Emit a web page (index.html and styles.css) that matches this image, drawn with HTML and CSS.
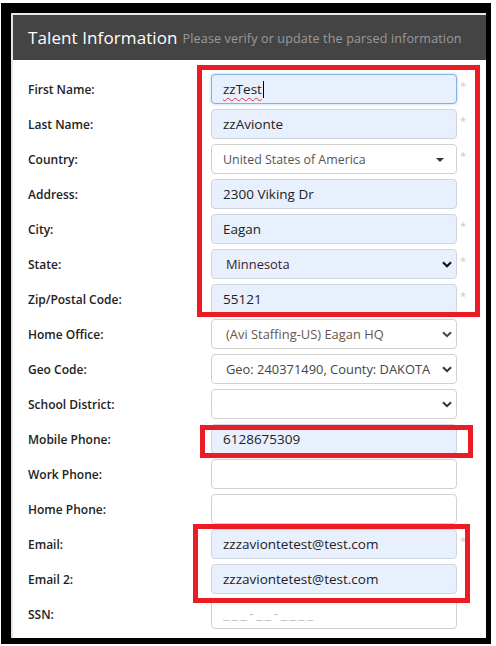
FILE: index.html
```html
<!DOCTYPE html>
<html lang="en">
<head>
    <meta charset="UTF-8">
    <meta name="viewport" content="width=device-width, initial-scale=1.0">
    <title>Talent Information</title>
    <link rel="stylesheet" href="styles.css">
</head>
<body>
    <div class="frame">
        <div class="panel">
            <div class="panel-head">
                <span class="title">Talent Information</span>
                <span class="subtitle">Please verify or update the parsed information</span>
            </div>

            <form class="panel-body">
                <label>First Name:</label>
                <div class="field filled focus"><span class="typo">zzTest</span><span class="caret"></span></div>
                <span class="req">*</span>

                <label>Last Name:</label>
                <input class="field filled" value="zzAvionte">
                <span class="req">*</span>

                <label>Country:</label>
                <div class="field picker">
                    <span>United States of America</span>
                    <span class="tri"></span>
                </div>
                <span class="req">*</span>

                <label>Address:</label>
                <input class="field filled" value="2300 Viking Dr">
                <span></span>

                <label>City:</label>
                <input class="field filled" value="Eagan">
                <span class="req">*</span>

                <label>State:</label>
                <div class="field filled dropdown state">
                    <span>Minnesota</span>
                    <svg width="10" height="7" viewBox="0 0 10 7"><path d="M1 1.2 L5 5.2 L9 1.2" fill="none" stroke="#111" stroke-width="2.2"/></svg>
                </div>
                <span class="req">*</span>

                <label>Zip/Postal Code:</label>
                <input class="field filled" value="55121">
                <span class="req">*</span>

                <label>Home Office:</label>
                <div class="field dropdown office">
                    <span>(Avi Staffing-US) Eagan HQ</span>
                    <svg width="10" height="7" viewBox="0 0 10 7"><path d="M1 1.2 L5 5.2 L9 1.2" fill="none" stroke="#444" stroke-width="2"/></svg>
                </div>
                <span></span>

                <label>Geo Code:</label>
                <div class="field dropdown">
                    <span>Geo: 240371490, County: DAKOTA</span>
                    <svg width="10" height="7" viewBox="0 0 10 7"><path d="M1 1.2 L5 5.2 L9 1.2" fill="none" stroke="#333" stroke-width="2"/></svg>
                </div>
                <span></span>

                <label>School District:</label>
                <div class="field dropdown">
                    <span></span>
                    <svg width="10" height="7" viewBox="0 0 10 7"><path d="M1 1.2 L5 5.2 L9 1.2" fill="none" stroke="#333" stroke-width="2"/></svg>
                </div>
                <span></span>

                <label>Mobile Phone:</label>
                <input class="field filled" value="6128675309">
                <span></span>

                <label>Work Phone:</label>
                <input class="field" value="">
                <span></span>

                <label>Home Phone:</label>
                <input class="field" value="">
                <span></span>

                <label>Email:</label>
                <input class="field filled" value="zzzaviontetest@test.com">
                <span class="req">*</span>

                <label>Email 2:</label>
                <input class="field filled" value="zzzaviontetest@test.com">
                <span></span>

                <label>SSN:</label>
                <input class="field ssn" placeholder="___-__-____">
                <span></span>
            </form>
        </div>
    </div>

    <!-- annotation boxes -->
    <div class="mark mark-address"></div>
    <div class="mark mark-mobile"></div>
    <div class="mark mark-email"></div>
</body>
</html>
```

FILE: styles.css
```css
* { box-sizing: border-box; }

body {
    margin: 0;
    background: #fff;
    font-family: "Open Sans", "DejaVu Sans", sans-serif;
    color: #222;
    position: relative;
    height: 646px;
    overflow: hidden;
}

.frame {
    margin: 3px 5px 2px 1px;
    height: 641px;
    border-style: solid;
    border-color: #000;
    border-width: 10px 5px 6px 10px;
    overflow: hidden;
}

.panel {
    height: 100%;
    border-top: 2px solid #e9e9e9;
    border-left: 2px solid #e4e4e4;
    background: #fff;
}

.panel-head {
    height: 45px;
    background: #444;
    display: flex;
    align-items: center;
    gap: 5px;
    padding-left: 15px;
    white-space: nowrap;
}

.title {
    color: #fff;
    font-size: 17px;
    font-weight: 500;
    letter-spacing: 0.1px;
}

.subtitle {
    color: #9a9a9a;
    font-size: 12.6px;
    letter-spacing: 0.12px;
    padding-top: 2px;
}

/* form grid */
.panel-body {
    display: grid;
    grid-template-columns: 183px 246px 14px;
    grid-auto-rows: 30px;
    row-gap: 5px;
    column-gap: 0;
    align-items: center;
    padding: 14px 0 0 15px;
}

.panel-body label {
    font-size: 12px;
    font-weight: 600;
    color: #222;
}

.field {
    height: 30px;
    width: 246px;
    border: 1px solid #d2d2d2;
    border-radius: 4px;
    background: #fff;
    padding: 0 11px;
    font-family: inherit;
    font-size: 13.5px;
    color: #222;
    display: flex;
    align-items: center;
    outline: none;
}

.ssn::placeholder {
    color: #c4c4c4;
    font-size: 14px;
    letter-spacing: 2.6px;
}

.filled {
    background: #e8f0fe;
    border-color: #cfd5de;
}

.focus {
    border-color: #7fb3e6;
    box-shadow: 0 0 3px rgba(102, 175, 233, 0.6);
}

.typo {
    text-decoration: underline wavy #e03030;
    text-decoration-thickness: 1px;
    text-underline-offset: 3px;
}

.caret {
    width: 1px;
    height: 17px;
    background: #000;
    margin-left: 1px;
}

.req {
    justify-self: start;
    align-self: start;
    margin: 6px 0 0 3px;
    color: #c8c8c8;
    font-size: 11px;
    line-height: 11px;
}

.picker {
    justify-content: space-between;
    font-size: 12.4px;
    color: #555;
    padding-right: 12px;
}

.tri {
    width: 0;
    height: 0;
    border-top: 4px solid #333;
    border-left: 4px solid transparent;
    border-right: 4px solid transparent;
    margin-top: 2px;
}

.dropdown {
    justify-content: space-between;
    padding-left: 14px;
    padding-right: 4px;
    font-size: 12.9px;
    color: #444;
}

.state { color: #3a1b2c; }
.office { color: #6a554b; }

/* red annotation boxes */
.mark {
    position: absolute;
    border: 5px solid #ed1c24;
}

.mark-address { left: 197px; top: 65px; width: 283px; height: 252px; }
.mark-mobile { left: 200px; top: 425px; width: 273px; height: 33px; }
.mark-email { left: 193px; top: 524px; width: 277px; height: 79px; }
```
